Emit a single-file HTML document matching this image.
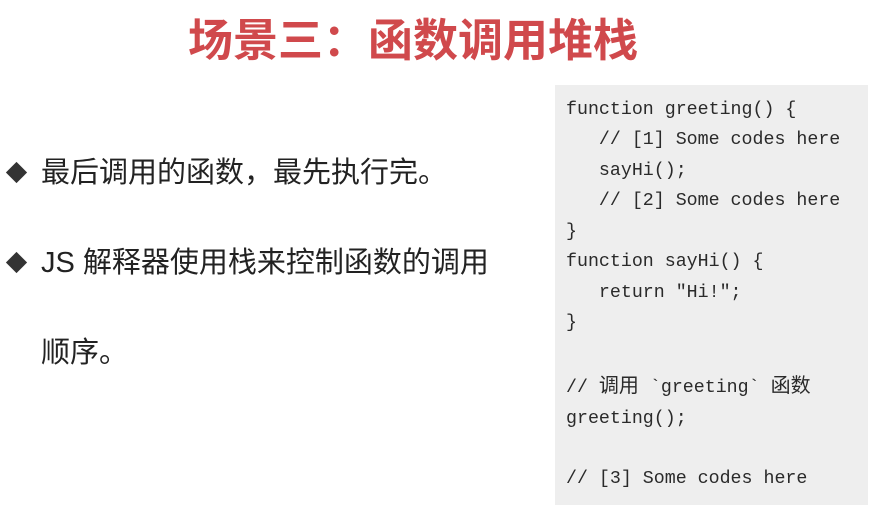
<!DOCTYPE html>
<html><head><meta charset="utf-8"><style>
html,body{margin:0;padding:0;background:#fff;width:878px;height:512px;overflow:hidden;position:relative}
.title{position:absolute;left:188px;top:4px;font:bold 45px "Liberation Sans","Noto Sans CJK SC",sans-serif;color:#d0494c;white-space:nowrap}
.b{position:absolute;font:29px "Liberation Sans","Noto Sans CJK SC",sans-serif;color:#222;white-space:nowrap;line-height:40px}
.d{position:absolute;width:15px;height:15px;background:#333;transform:rotate(45deg)}
.code{position:absolute;left:555px;top:85px;width:313px;height:420px;background:#eeeeee}
pre{margin:0;position:absolute;left:566px;top:95px;font:18.3px "Liberation Mono",monospace;line-height:30.45px;color:#2a2a2a}
.c{font-family:"Noto Sans CJK SC",sans-serif;font-size:20px}
</style></head><body>
<div class="title">场景三：函数调用堆栈</div>
<div class="d" style="left:9px;top:165px"></div>
<div class="b" style="left:41px;top:153px">最后调用的函数，最先执行完。</div>
<div class="d" style="left:9px;top:255px"></div>
<div class="b" style="left:41px;top:243px">JS 解释器使用栈来控制函数的调用</div>
<div class="b" style="left:41px;top:333px">顺序。</div>
<div class="code"></div>
<pre>function greeting() {
   // [1] Some codes here
   sayHi();
   // [2] Some codes here
}
function sayHi() {
   return "Hi!";
}

// <span class="c">调用</span> `greeting` <span class="c">函数</span>
greeting();

// [3] Some codes here</pre>
</body></html>
